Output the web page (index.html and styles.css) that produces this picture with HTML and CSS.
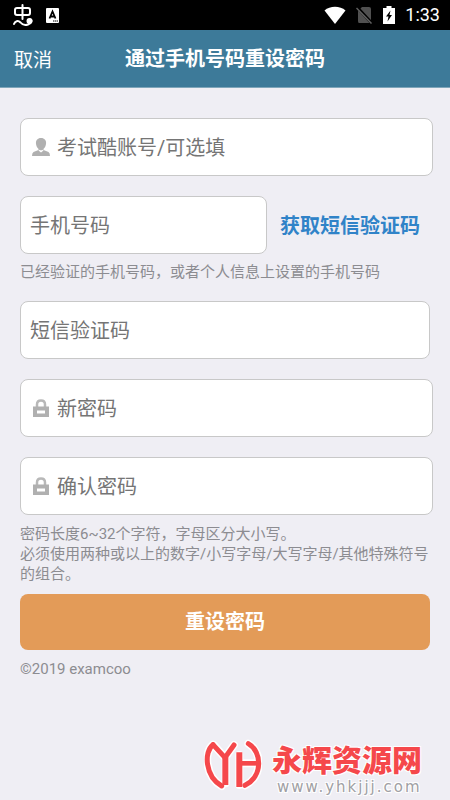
FILE: index.html
```html
<!DOCTYPE html>
<html lang="zh-CN">
<head>
<meta charset="utf-8">
<meta name="viewport" content="width=device-width, initial-scale=1">
<title>通过手机号码重设密码</title>
<link rel="stylesheet" href="styles.css">
</head>
<body>
<div class="status">
  <div class="status-group">
    <svg width="22" height="24" viewBox="0 0 22 24" fill="none" stroke="#fff" stroke-width="2" stroke-linecap="round" stroke-linejoin="round" aria-hidden="true">
      <rect x="3" y="5" width="15" height="7" rx="2"/>
      <path d="M10.500 2V16M2 21C3 18 6 17 8.500 19.500C10.500 22 13 22.500 16 21.500C20 20 20.500 16 17.500 16.500"/>
      <circle cx="17.500" cy="18" r="2" fill="#fff"/>
    </svg>
    <svg width="13" height="15" viewBox="0 0 13 15" aria-hidden="true">
      <rect width="13" height="15" rx="1" fill="#fff"/>
      <path d="M3.500 10.500L6.500 3.500L9.500 10.500M4.500 8.500H8.500" fill="none" stroke="#000" stroke-width="1.800"/>
      <path d="M7 13H12" stroke="#000" stroke-dasharray="1.500 .5"/>
    </svg>
  </div>
  <div class="status-group status-right">
    <svg width="22" height="18" viewBox="0 0 22 18" aria-hidden="true"><path d="M0.500 4.500C6 -.5 16 -.5 21.500 4.500L11 18Z" fill="#fff"/></svg>
    <svg width="17" height="18" viewBox="0 0 17 18" aria-hidden="true">
      <path d="M6 1H13Q15 1 15 3V17H3Q2 17 2 15V5Z" fill="#505050"/>
      <path d="M1 1L16 17.500" stroke="#000" stroke-width="3"/>
      <path d="M0.500 2L15.500 17.500" stroke="#606060" stroke-width="1.500"/>
    </svg>
    <svg width="12" height="18" viewBox="0 0 12 18" aria-hidden="true">
      <path d="M3.500 0H8.500V2H12V18H0V2H3.500Z" fill="#fff"/>
      <path d="M7.500 4.500L3 10.500H5.500L4.500 15.500L9 9H6.500Z" fill="#000"/>
    </svg>
    <span class="clock">1:33</span>
  </div>
</div>
<header class="navbar">
  <a class="cancel" href="#">取消</a>
  <h1 class="title">通过手机号码重设密码</h1>
</header>
<form class="form">
  <label class="field field-wide">
    <svg class="icon" viewBox="0 0 18 18" aria-hidden="true">
      <path d="M9 0C12.500 0 14.500 2.500 14 6C13.500 9 12 11.500 9 11.500S4.500 9 4 6C3.500 2.500 5.500 0 9 0Z" fill="#b0b0b0"/>
      <path d="M6.500 10H11.500V12L16.500 14Q18 15 18 18H0Q0 15 1.500 14L6.500 12Z" fill="#b0b0b0"/>
      <path d="M6.500 12.500L9 14.500L11.500 12.500L11 11.700Q9 13 7 11.700Z" fill="#fff"/>
    </svg>
    <input class="input" type="text" placeholder="考试酷账号/可选填" aria-label="考试酷账号/可选填">
  </label>
  <div class="row">
    <label class="field phone"><input class="input" type="tel" placeholder="手机号码" aria-label="手机号码"></label>
    <button class="code-button" type="button">获取短信验证码</button>
  </div>
  <p class="hint phone-hint">已经验证的手机号码，或者个人信息上设置的手机号码</p>
  <label class="field"><input class="input" type="text" placeholder="短信验证码" aria-label="短信验证码"></label>
  <label class="field field-wide">
    <svg class="icon" viewBox="0 0 18 18" aria-hidden="true">
      <path d="M5 8V5.500Q5 1.500 9 1.500T13 5.500V8" fill="none" stroke="#b8b8b8" stroke-width="2.500"/>
      <path d="M1 7.500H17V18H1ZM5 11.500V14.500H13V11.500Z" fill="#b0b0b0" fill-rule="evenodd"/>
    </svg>
    <input class="input" type="password" placeholder="新密码" aria-label="新密码">
  </label>
  <label class="field field-wide">
    <svg class="icon" viewBox="0 0 18 18" aria-hidden="true">
      <path d="M5 8V5.500Q5 1.500 9 1.500T13 5.500V8" fill="none" stroke="#b8b8b8" stroke-width="2.500"/>
      <path d="M1 7.500H17V18H1ZM5 11.500V14.500H13V11.500Z" fill="#b0b0b0" fill-rule="evenodd"/>
    </svg>
    <input class="input" type="password" placeholder="确认密码" aria-label="确认密码">
  </label>
  <p class="hint rules">密码长度6~32个字符，字母区分大小写。<br>必须使用两种或以上的数字/小写字母/大写字母/其他特殊符号的组合。</p>
  <button class="submit" type="submit">重设密码</button>
</form>
<footer class="hint footer">©2019 examcoo</footer>
<div class="watermark">
  <svg width="58" height="56" viewBox="9 12 174 168" fill="none" stroke-linejoin="round" aria-hidden="true">
    <g stroke="#fff" stroke-width="24" stroke-linecap="round">
      <path d="M36 29C8 50 12 125 62 153M38 30L72 68L99 30M74 66V145M115 60V150M115 85H168M142 26C184 50 186 125 132 151"/>
    </g>
    <g stroke="#f5484b" stroke-width="15">
      <path d="M36 29C8 50 12 125 62 153M142 26C184 50 186 125 132 151" stroke-linecap="round"/>
      <path d="M36 29L72 68L99 30" stroke-linecap="round"/>
      <path d="M73 66V150M115 52V156" stroke-width="18"/>
      <path d="M115 85H168" stroke-width="14"/>
    </g>
  </svg>
  <div class="mark-text">
    <span class="mark-name">永辉资源网</span>
    <span class="mark-url">www.yhkjjj.com</span>
  </div>
</div>
</body>
</html>
```
FILE: styles.css
```css
* {
  box-sizing: border-box;
}

body {
  margin: 0;
  min-height: 100vh;
  background: #efeef4;
  font-family: Roboto, "Noto Sans CJK SC", sans-serif;
  color: #8c8c91;
}

.status {
  display: flex;
  justify-content: space-between;
  align-items: center;
  height: 30px;
  padding: 0 10px 0 12px;
  background: #000;
  color: #fff;
}

.status-group {
  display: flex;
  align-items: center;
  gap: 12px;
}

.status-right {
  gap: 10px;
}

.clock {
  font-size: 18px;
  line-height: 20px;
}

.navbar {
  display: grid;
  grid-template-columns: 1fr auto 1fr;
  align-items: center;
  height: 58px;
  padding: 0 14px;
  background: #3d7a99;
  border-bottom: 1px solid #7fa6ba;
}

.cancel {
  padding-top: 4px;
  color: #fff;
  font-size: 19px;
  line-height: 24px;
  text-decoration: none;
}

.title {
  margin: 0;
  color: #fff;
  font-size: 20px;
  line-height: 28px;
  font-weight: 700;
}

.form {
  padding: 30px 20px 0;
}

.field {
  display: flex;
  align-items: center;
  height: 58px;
  margin-bottom: 20px;
  padding: 0 9px;
  background: #fff;
  border: 1px solid #c8c8c8;
  border-radius: 8px;
}

.field-wide {
  margin-right: -3px;
  padding-left: 11px;
}

.icon {
  flex: none;
  width: 18px;
  height: 18px;
  margin-right: 7px;
}

.input {
  flex: 1;
  min-width: 0;
  padding: 2px 0 0;
  border: 0;
  outline: 0;
  background: none;
  font: 20px/28px Roboto, "Noto Sans CJK SC", sans-serif;
  color: #333;
}

.input::placeholder {
  color: #757575;
}

.row {
  display: flex;
  align-items: center;
}

.phone {
  flex: 1;
  min-width: 0;
  margin: 0;
}

.code-button {
  padding: 2px 10px 0 13px;
  border: 0;
  background: none;
  color: #3083c8;
  font: 700 20px/28px Roboto, "Noto Sans CJK SC", sans-serif;
}

.hint {
  margin: 0;
  font-size: 15px;
  line-height: 20px;
}

.phone-hint {
  padding: 8px 0 19px;
}

.rules {
  margin: -11px 0 10px;
}

.submit {
  display: block;
  width: 100%;
  height: 56px;
  border: 0;
  border-radius: 8px;
  background: #e39b58;
  color: #fff;
  font: 700 20px/28px Roboto, "Noto Sans CJK SC", sans-serif;
}

.footer {
  padding: 9px 20px 0;
}

.watermark {
  position: absolute;
  right: 28px;
  bottom: 5px;
  display: flex;
  align-items: flex-end;
  gap: 10px;
}

.mark-text {
  display: flex;
  flex-direction: column;
  text-shadow: 1px 1px 0 #fff, -1px -1px 0 #fff, 1px -1px 0 #fff, -1px 1px 0 #fff;
}

.mark-name {
  color: #f5484b;
  font-size: 30px;
  line-height: 36px;
  font-weight: 900;
}

.mark-url {
  color: #a0a0a4;
  font: 15px/16px "DejaVu Sans", sans-serif;
  letter-spacing: 2px;
  padding-left: 5px;
}
```
